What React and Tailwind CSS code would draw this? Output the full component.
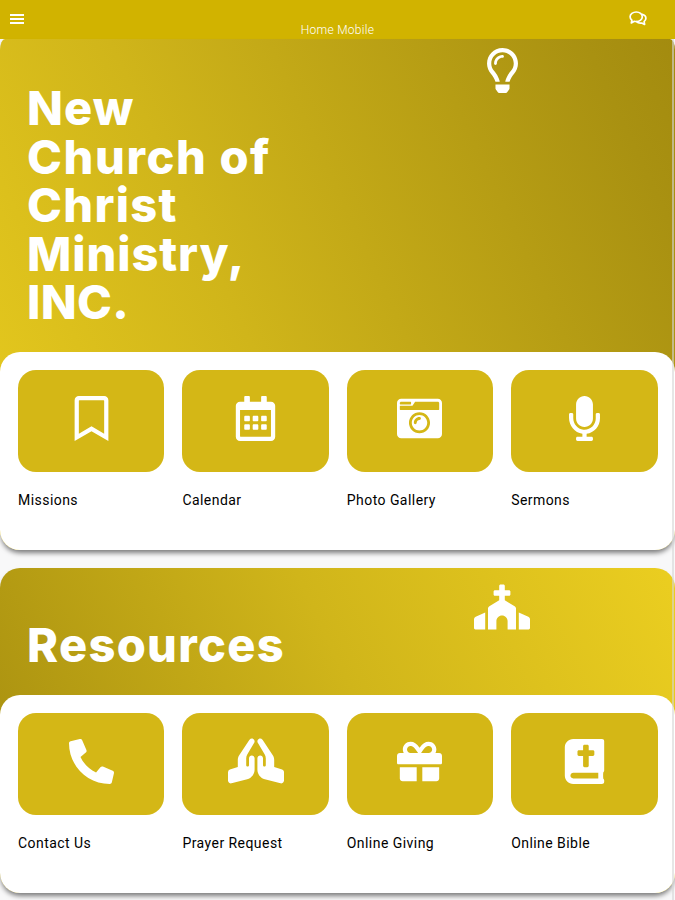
import React from 'react';
import {
  FaRegLightbulb,
  FaRegBookmark,
  FaRegCalendarAlt,
  FaCameraRetro,
  FaMicrophone,
  FaChurch,
  FaPhone,
  FaPrayingHands,
  FaGift,
  FaBible,
} from 'react-icons/fa';

const sections = [
  {
    lines: [
      { text: 'New', style: 'tracking-[1px]' },
      { text: 'Church of', style: 'tracking-[1.6px]' },
      { text: 'Christ', style: 'tracking-[1.3px]' },
      { text: 'Ministry,', style: 'tracking-[0.9px]' },
      { text: 'INC.', style: 'tracking-[0.3px]' },
    ],
    icon: <FaRegLightbulb size={45} />,
    corners: 'rounded-b-[20px] [border-top-left-radius:5px_11px] [border-top-right-radius:5px_11px]',
    header: 'h-[313px] pt-[45px]',
    iconBox: 'pt-[9px]',
    gradient: 'bg-[linear-gradient(65deg,#e8cb1e_0%,#d0b51a_38%,#a99111_90%,#a38b0f_100%)]',
    tiles: [
      { label: 'Missions', icon: <FaRegBookmark size={45} /> },
      { label: 'Calendar', icon: <FaRegCalendarAlt size={45} /> },
      { label: 'Photo Gallery', icon: <FaCameraRetro size={45} /> },
      { label: 'Sermons', icon: <FaMicrophone size={45} /> },
    ],
  },
  {
    lines: [{ text: 'Resources', style: 'tracking-[1.3px]' }],
    icon: <FaChurch size={56} />,
    corners: 'rounded-[20px]',
    header: 'h-[127px] pt-[52.5px]',
    iconBox: 'pt-[3px]',
    gradient: 'bg-[linear-gradient(65deg,#a58d0f_0%,#d0b51a_54%,#ebce20_100%)]',
    tiles: [
      { label: 'Contact Us', icon: <FaPhone size={45} className="-scale-x-100" /> },
      { label: 'Prayer Request', icon: <FaPrayingHands size={56} /> },
      { label: 'Online Giving', icon: <FaGift size={45} /> },
      { label: 'Online Bible', icon: <FaBible size={45} /> },
    ],
  },
];

const ChatIcon = () => (
  <svg width="18" height="15" viewBox="0 0 18 15" fill="none" stroke="currentColor" strokeWidth="1.7" strokeLinecap="round" strokeLinejoin="round">
    <path d="M7.3 1C3.8 1 1.1 3 1.1 5.8c0 1.4.7 2.6 1.8 3.4L2.3 12l3-1.7c.6.1 1.3.2 2 .2 3.4 0 6-2.1 6-4.7S10.7 1 7.3 1Z" />
    <path d="M13.2 3.3c2.3.5 3.7 2.1 3.7 4 0 1.3-.7 2.5-1.8 3.3l.5 2.9-2.9-1.5c-2 .3-4-.2-5.2-1.4" />
  </svg>
);

const Tile = ({ label, icon }) => (
  <div>
    <div className="h-[101.5px] rounded-[18px] bg-[#d4b716] text-white flex items-center justify-center pb-[5px]">
      {icon}
    </div>
    <p className="mt-[18px] text-[14px] leading-5 tracking-[0.45px] text-black whitespace-nowrap">{label}</p>
  </div>
);

const Section = ({ lines, icon, corners, header, iconBox, gradient, tiles }) => (
  <section className={`w-[674.5px] shadow-[0_4px_5px_-1px_rgba(0,0,0,0.5)] ${corners} ${gradient}`}>
    <div className={`flex ${header}`}>
      <h2 className="w-[330px] shrink-0 pl-[27px] font-['Inter'] font-extrabold text-[47px] leading-[48.5px] text-white whitespace-nowrap">
        {lines.map((line) => (
          <span key={line.text} className={`block ${line.style}`}>{line.text}</span>
        ))}
      </h2>
      <div className="flex-1 flex justify-center text-white -mt-[45px]">
        <div className={iconBox}>{icon}</div>
      </div>
    </div>
    <div className="h-[198px] rounded-[20px] bg-white pl-[18px] pr-[17px] pt-[18px] grid grid-cols-4 gap-x-[18px]">
      {tiles.map((tile) => (
        <Tile key={tile.label} {...tile} />
      ))}
    </div>
  </section>
);

const App = () => {
  return (
    <div className="relative h-[900px] w-[675px] overflow-hidden bg-[#f8f8f9] font-['Roboto',sans-serif]">
      <header className="h-[39px] bg-[#d1b300] text-white grid grid-cols-3 px-[10px]">
        <div className="pt-[14px] flex flex-col gap-[2.5px]">
          <span className="block h-[1.5px] w-[14px] bg-white" />
          <span className="block h-[1.5px] w-[14px] bg-white" />
          <span className="block h-[1.5px] w-[14px] bg-white" />
        </div>
        <h1 className="pt-[22px] text-center text-[12px] leading-4 font-light tracking-[0.3px]">Home Mobile</h1>
        <div className="flex justify-end pt-[11px] pr-[18px]">
          <ChatIcon />
        </div>
      </header>
      <main className="flex flex-col gap-[18px]">
        {sections.map((section) => (
          <Section key={section.lines[0].text} {...section} />
        ))}
      </main>

      {/* Scroll track over the right edge */}
      <div className="absolute top-[39px] right-[1px] bottom-0 w-[2px] bg-[#d5d5d5]/60" />
    </div>
  );
};

export default App;
